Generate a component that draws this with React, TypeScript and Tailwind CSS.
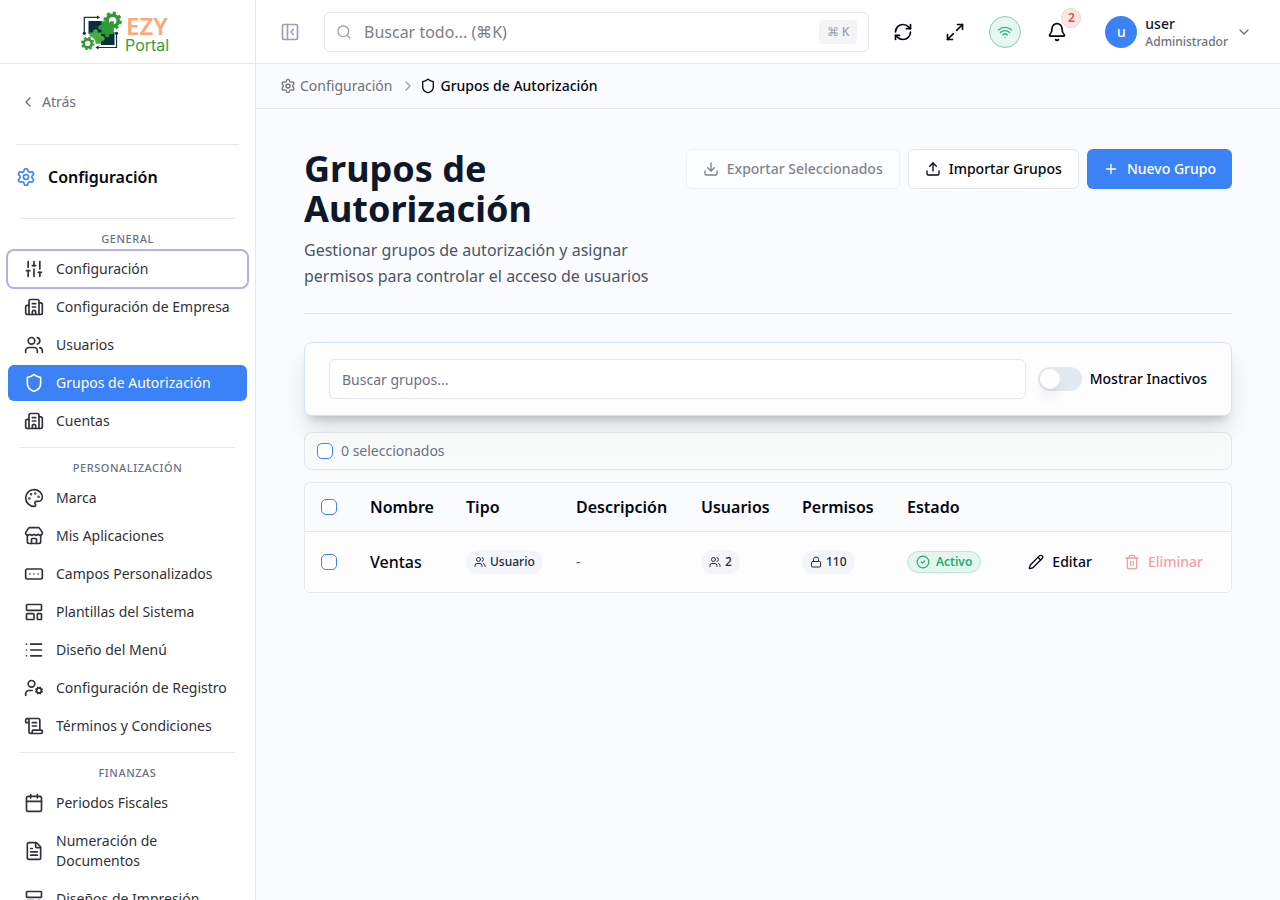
import React, { useState } from 'react';
import {
  Bell,
  Building2,
  Calendar,
  ChevronDown,
  ChevronLeft,
  ChevronRight,
  CircleCheck,
  Download,
  FileText,
  LayoutTemplate,
  List,
  Lock,
  LucideIcon,
  Maximize2,
  Palette,
  PanelLeftClose,
  Pencil,
  Plus,
  RectangleEllipsis,
  RefreshCw,
  ScrollText,
  Search,
  Settings,
  Shield,
  SlidersVertical,
  Store,
  Trash2,
  Upload,
  UserCog,
  Users,
  Wifi,
} from 'lucide-react';
import clsx from 'clsx';

interface NavItem {
  label: string;
  icon: LucideIcon;
  active?: boolean;
  focused?: boolean;
}

interface NavGroup {
  title: string;
  items: NavItem[];
}

interface Group {
  name: string;
  type: string;
  description: string;
  users: number;
  permissions: number;
  status: string;
}

const navGroups: NavGroup[] = [
  {
    title: 'General',
    items: [
      { label: 'Configuración', icon: SlidersVertical, focused: true },
      { label: 'Configuración de Empresa', icon: Building2 },
      { label: 'Usuarios', icon: Users },
      { label: 'Grupos de Autorización', icon: Shield, active: true },
      { label: 'Cuentas', icon: Building2 },
    ],
  },
  {
    title: 'Personalización',
    items: [
      { label: 'Marca', icon: Palette },
      { label: 'Mis Aplicaciones', icon: Store },
      { label: 'Campos Personalizados', icon: RectangleEllipsis },
      { label: 'Plantillas del Sistema', icon: LayoutTemplate },
      { label: 'Diseño del Menú', icon: List },
      { label: 'Configuración de Registro', icon: UserCog },
      { label: 'Términos y Condiciones', icon: ScrollText },
    ],
  },
  {
    title: 'Finanzas',
    items: [
      { label: 'Periodos Fiscales', icon: Calendar },
      { label: 'Numeración de Documentos', icon: FileText },
      { label: 'Diseños de Impresión', icon: LayoutTemplate },
    ],
  },
];

const groups: Group[] = [
  { name: 'Ventas', type: 'Usuario', description: '-', users: 2, permissions: 110, status: 'Activo' },
];

const Logo: React.FC = () => (
  <svg width="96" height="42" viewBox="0 0 96 42" role="img" aria-label="EZY Portal">
    {/* Gears */}
    <circle cx="32.6" cy="9.8" r="5.6" fill="none" stroke="#2f9a35" strokeWidth="3.6" />
    <circle cx="32.6" cy="9.8" r="8" fill="none" stroke="#2f9a35" strokeWidth="2.4" strokeDasharray="3.2 3.08" />
    <circle cx="7.7" cy="32.4" r="4" fill="none" stroke="#2f9a35" strokeWidth="2.6" />
    <circle cx="7.7" cy="32.4" r="5.8" fill="none" stroke="#2f9a35" strokeWidth="1.8" strokeDasharray="2.3 2.25" />
    {/* Puzzle */}
    <rect x="8.5" y="10" width="13.5" height="13" rx="0.6" fill="#06303a" />
    <rect x="21" y="21" width="13.5" height="13" rx="0.6" fill="#06303a" />
    <path
      d="M21.5 10.3h4.6a2.3 2.3 0 0 0 4.4 0h3.3v12.6h-4.4a2.4 2.4 0 1 1-4.4 0h-3.5v-4.3a2.4 2.4 0 1 1 0-4.4z"
      fill="#2f9a35"
    />
    <path
      d="M9.5 21.5h3.8a2.4 2.4 0 1 1 4.4 0h3.6v3.8a2.4 2.4 0 1 1 0 4.4v3.1h-5.6a8 8 0 0 0-6.2-7.6z"
      fill="#48ab3d"
    />
    {/* Connectors */}
    <path d="M4.3 22.3V6.3h13.5M36.5 22.3v14.2H18" fill="none" stroke="#12343f" strokeWidth="1.2" />
    <path d="m17 4.4 3.2 1.9L17 8.2zM18.6 34.6l-3.2 1.9 3.2 1.9z" fill="#12343f" />
    <circle cx="4.3" cy="22.3" r="1.6" fill="#12343f" />
    <circle cx="36.5" cy="22.3" r="1.6" fill="#12343f" />
    <text x="46" y="24" fill="#fba777" fontFamily="Noto Sans, sans-serif" fontSize="24" fontWeight="600">
      EZY
    </text>
    <text x="45" y="40" fill="#3a9b3e" fontFamily="Inter, sans-serif" fontSize="16">
      Portal
    </text>
  </svg>
);

const Checkbox: React.FC<{ label: string }> = ({ label }) => (
  <input
    type="checkbox"
    aria-label={label}
    className="block size-4 shrink-0 appearance-none rounded-[5px] border border-[#3b82f6] bg-white checked:bg-[#3b82f6]"
  />
);

const Pill: React.FC<{ icon: LucideIcon; children: React.ReactNode }> = ({ icon: Icon, children }) => (
  <span className="inline-flex h-6 items-center gap-1 rounded-full bg-[#f3f5f8] px-2 align-middle text-xs font-medium text-gray-800">
    <Icon size={12} />
    {children}
  </span>
);

const Sidebar: React.FC = () => (
  <aside className="flex w-64 shrink-0 flex-col border-r border-gray-200 bg-white">
    <div className="flex h-16 shrink-0 items-center justify-center border-b border-gray-200">
      <Logo />
    </div>

    <div className="flex-1 overflow-y-auto [scrollbar-width:none]">
      <div className="mx-4 border-b border-gray-200 pt-4 pb-5">
        <a href="#atras" className="flex h-11 items-center gap-1.5 px-1 text-sm text-gray-500">
          <ChevronLeft size={16} />
          Atrás
        </a>
      </div>

      <h2 className="flex h-16 items-center gap-3 px-4 text-base font-semibold text-gray-950">
        <Settings size={20} className="text-[#3b82f6]" />
        Configuración
      </h2>

      <nav className="px-2 pt-px pb-4">
        {navGroups.map((group) => (
          <div key={group.title} className="pt-2">
            <h3 className="mx-3 border-t border-gray-200 pt-3 pb-1 text-center text-[11px] leading-4 font-medium tracking-wider text-gray-500 uppercase">
              {group.title}
            </h3>
            <ul className="flex flex-col gap-0.5">
              {group.items.map(({ label, icon: Icon, active, focused }) => (
                <li key={label}>
                  <a
                    href="#"
                    aria-current={active ? 'page' : undefined}
                    className={clsx(
                      'flex items-center gap-3 rounded-md px-4 py-2 text-sm',
                      active ? 'bg-[#3b82f6] text-white' : 'text-[#303238]',
                      focused && 'ring-2 ring-[#b7afe8]'
                    )}
                  >
                    <Icon size={20} className="shrink-0" />
                    <span>{label}</span>
                  </a>
                </li>
              ))}
            </ul>
          </div>
        ))}
      </nav>
    </div>
  </aside>
);

const Header: React.FC = () => (
  <header className="flex h-16 shrink-0 items-center border-b border-gray-200 bg-white pr-3 pl-4">
    <button aria-label="Contraer menú" className="flex h-9 w-9 items-center justify-center text-gray-400">
      <PanelLeftClose size={20} />
    </button>

    <div className="mr-3 ml-4 flex h-10 flex-1 items-center gap-3 rounded-md border border-gray-200 bg-white px-[11px]">
      <Search size={16} className="shrink-0 text-gray-400" />
      <input
        type="search"
        aria-label="Buscar todo"
        placeholder="Buscar todo... (⌘K)"
        className="min-w-0 flex-1 bg-transparent text-base outline-none placeholder:text-[#7c7e83]"
      />
      <kbd className="flex h-6 items-center rounded bg-gray-100 px-2 font-[inherit] text-xs font-medium text-gray-400">
        ⌘ K
      </kbd>
    </div>

    <div className="flex items-center gap-2 text-gray-950">
      <button aria-label="Actualizar" className="flex h-10 w-11 items-center justify-center">
        <RefreshCw size={20} />
      </button>
      <button aria-label="Pantalla completa" className="flex h-10 w-11 items-center justify-center">
        <Maximize2 size={20} />
      </button>
      <div className="flex w-10 justify-center">
        <span className="flex size-8 items-center justify-center rounded-full border border-[#86d3b0] bg-[#e6f7ef] text-[#2fb37c]">
          <Wifi size={16} />
        </span>
      </div>
      <button aria-label="Notificaciones" className="relative flex h-10 w-12 items-center justify-center">
        <Bell size={20} />
        <span className="absolute -top-1 right-0 flex size-5 items-center justify-center rounded-full border border-[#f9cfcf] bg-[#fde6e6] text-xs font-semibold text-[#e5484d]">
          2
        </span>
      </button>
      <button className="flex items-center gap-2 px-4 text-left">
        <span className="flex size-8 items-center justify-center rounded-full bg-[#3b82f6] text-sm font-medium text-white">
          u
        </span>
        <span className="flex flex-col">
          <span className="text-sm leading-5 font-medium text-gray-900">user</span>
          <span className="text-xs leading-4 font-medium text-[#6f7278]">Administrador</span>
        </span>
        <ChevronDown size={16} className="text-gray-500" />
      </button>
    </div>
  </header>
);

const Breadcrumbs: React.FC = () => (
  <nav aria-label="Ruta" className="border-b border-gray-200 px-6 py-3">
    <ol className="flex items-center gap-2 text-sm">
      <li>
        <a href="#configuracion" className="flex items-center gap-1 text-[#6f7278]">
          <Settings size={16} />
          Configuración
        </a>
      </li>
      <li className="flex items-center gap-1 font-medium text-gray-950" aria-current="page">
        <ChevronRight size={16} className="text-gray-400" />
        <Shield size={16} />
        Grupos de Autorización
      </li>
    </ol>
  </nav>
);

const PageHeader: React.FC = () => (
  <div className="flex items-start justify-between gap-4 border-b border-gray-200 pb-6">
    <div className="min-w-0 flex-1">
      <h1 className="text-4xl font-bold text-slate-900">Grupos de Autorización</h1>
      <p className="mt-2 text-base leading-[26px] text-gray-600">
        Gestionar grupos de autorización y asignar permisos para controlar el acceso de usuarios
      </p>
    </div>
    <div className="flex shrink-0 gap-2 text-sm font-medium">
      <button
        disabled
        className="flex h-10 items-center gap-2 rounded-md border border-gray-200 bg-white px-4 text-gray-950 opacity-50"
      >
        <Download size={16} />
        Exportar Seleccionados
      </button>
      <button className="flex h-10 items-center gap-2 rounded-md border border-gray-200 bg-white px-4 text-gray-950">
        <Upload size={16} />
        Importar Grupos
      </button>
      <button className="flex h-10 items-center gap-2 rounded-md bg-[#3b82f6] px-4 text-white">
        <Plus size={16} />
        Nuevo Grupo
      </button>
    </div>
  </div>
);

const GroupsTable: React.FC = () => (
  <div className="mt-3 overflow-hidden rounded-md border border-gray-200">
    <table className="w-full text-left">
      <thead>
        <tr className="h-12 border-b border-gray-200 text-base text-gray-950 [&>th]:px-4 [&>th]:font-semibold">
          <th className="w-[49px]">
            <Checkbox label="Seleccionar todos" />
          </th>
          <th className="w-24">Nombre</th>
          <th className="w-[110px]">Tipo</th>
          <th className="w-[125px]">Descripción</th>
          <th className="w-[101px]">Usuarios</th>
          <th className="w-[105px]">Permisos</th>
          <th className="w-[106px]">Estado</th>
          <th aria-label="Acciones" />
        </tr>
      </thead>
      <tbody>
        {groups.map((group) => (
          <tr key={group.name} className="h-[61px] bg-[#fdfdfe] text-sm [&>td]:px-4">
            <td>
              <Checkbox label={`Seleccionar ${group.name}`} />
            </td>
            <td className="text-base font-medium text-gray-950">{group.name}</td>
            <td>
              <Pill icon={Users}>{group.type}</Pill>
            </td>
            <td className="text-gray-600">{group.description}</td>
            <td>
              <Pill icon={Users}>{group.users}</Pill>
            </td>
            <td>
              <Pill icon={Lock}>{group.permissions}</Pill>
            </td>
            <td>
              <span className="inline-flex h-[22px] items-center gap-1.5 rounded-full border border-[#bfe6d4] bg-[#e3f5ec] px-2 align-middle text-xs font-semibold text-[#27a974]">
                <CircleCheck size={14} />
                {group.status}
              </span>
            </td>
            <td>
              <div className="flex justify-end gap-2 font-medium">
                <button className="flex h-9 items-center gap-2 px-3 text-gray-950">
                  <Pencil size={16} />
                  Editar
                </button>
                <button disabled className="flex h-9 items-center gap-2 px-3 text-[#ef4444] opacity-50">
                  <Trash2 size={16} />
                  Eliminar
                </button>
              </div>
            </td>
          </tr>
        ))}
      </tbody>
    </table>
  </div>
);

const App: React.FC = () => {
  const [query, setQuery] = useState('');
  const [showInactive, setShowInactive] = useState(false);

  return (
    <div className="flex h-screen overflow-hidden bg-[#fafbfd] font-['Noto_Sans',sans-serif] text-gray-950">
      <Sidebar />
      <div className="flex min-w-0 flex-1 flex-col">
        <Header />
        <Breadcrumbs />
        <main className="flex-1 overflow-y-auto px-12 py-10 [scrollbar-width:none]">
          <PageHeader />

          <div className="mt-7 flex items-center gap-3 rounded-lg border border-[#d5e2f5] bg-[#fdfdfe] px-6 py-4 shadow-[0_16px_25px_-3px_rgba(0,0,0,0.12),0_8px_10px_-6px_rgba(0,0,0,0.2)]">
            <input
              type="text"
              aria-label="Buscar grupos"
              placeholder="Buscar grupos..."
              value={query}
              onChange={(e) => setQuery(e.target.value)}
              className="h-10 min-w-0 flex-1 rounded-md border border-gray-200 bg-white px-3 text-sm outline-none placeholder:text-gray-500"
            />
            <div className="flex items-center gap-2">
              <input
                id="show-inactive"
                type="checkbox"
                role="switch"
                checked={showInactive}
                onChange={(e) => setShowInactive(e.target.checked)}
                className="h-6 w-11 appearance-none rounded-full bg-slate-200 p-0.5 before:block before:size-5 before:rounded-full before:bg-white before:shadow-lg checked:bg-[#3b82f6] checked:before:translate-x-5"
              />
              <label htmlFor="show-inactive" className="text-sm font-medium">
                Mostrar Inactivos
              </label>
            </div>
          </div>

          <div className="mt-4 flex h-[38px] items-center gap-2 rounded-lg border border-gray-500/15 bg-[#f8faf8]/65 px-3 text-sm text-gray-500">
            <Checkbox label="Seleccionar todos los grupos" />
            0 seleccionados
          </div>

          <GroupsTable />
        </main>
      </div>
    </div>
  );
};

export default App;
